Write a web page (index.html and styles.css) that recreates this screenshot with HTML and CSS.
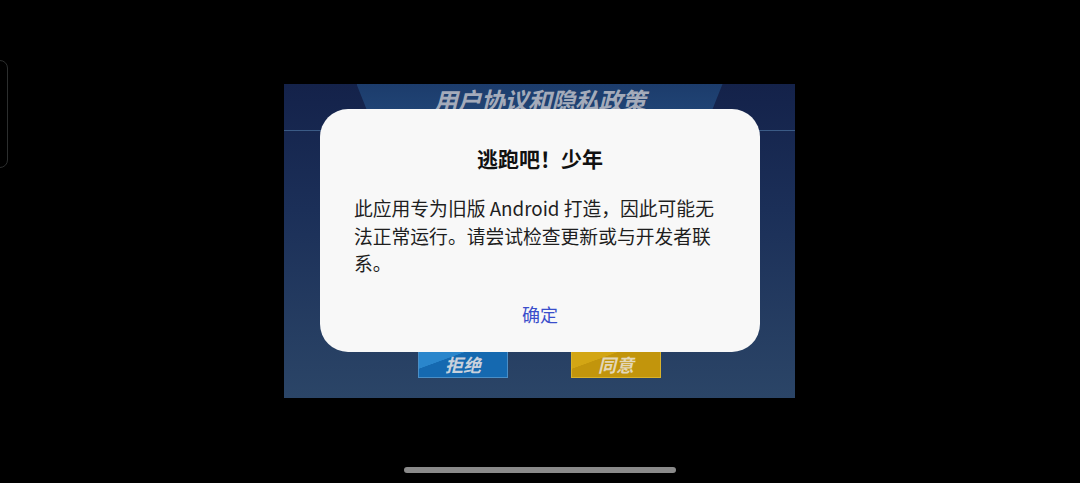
FILE: index.html
```html
<!doctype html>
<html lang="zh">
<head>
    <meta charset="utf-8">
    <title>逃跑吧！少年</title>
    <link rel="stylesheet" href="styles.css">
</head>
<body>

<div class="screen">
    <div class="side-handle"></div>

    <div class="game-panel">
        <div class="panel-header">
            <div class="header-band">
                <span class="panel-title">用户协议和隐私政策</span>
            </div>
        </div>
        <div class="panel-body">
            <div class="game-button refuse">拒绝</div>
            <div class="game-button agree">同意</div>
        </div>
    </div>

    <div class="dialog">
        <h2 class="dialog-title">逃跑吧！少年</h2>
        <p class="dialog-text">此应用专为旧版 Android 打造，因此可能无法正常运行。请尝试检查更新或与开发者联系。</p>
        <div class="dialog-actions">
            <button class="dialog-button">确定</button>
        </div>
    </div>

    <div class="home-bar"></div>
</div>

</body>
</html>
```

FILE: styles.css
```css
body {
    margin: 0;
    background-color: #000000;
    font-family: "Noto Sans CJK SC", "Noto Sans", sans-serif;
}

.screen {
    position: relative;
    width: 1080px;
    height: 483px;
    display: flex;
    align-items: center;
    justify-content: center;
    overflow: hidden;
}

.side-handle {
    position: absolute; /* system edge overlay */
    left: -10px;
    top: 60px;
    width: 16px;
    height: 106px;
    border: 1px solid #2c2e2e;
    border-radius: 8px;
}

.game-panel {
    width: 511px;
    height: 314px;
    margin: 0 1px 1px 0; /* nudges the panel onto whole pixels */
    display: flex;
    flex-direction: column;
    background: linear-gradient(180deg, #14224a 0%, #1b2f58 40%, #2b4567 100%);
}

.panel-header {
    height: 46px;
    display: flex;
    justify-content: center;
    border-bottom: 1px solid #3b5b86;
}

.header-band {
    width: 366px;
    display: flex;
    justify-content: center;
    background: linear-gradient(180deg, #1c3c6c 0%, #23497a 100%);
    clip-path: polygon(0 0, 100% 0, 95% 100%, 5% 100%);
}

.panel-title {
    margin-top: -1px;
    font-size: 24px;
    line-height: 34px;
    font-style: italic;
    font-weight: bold;
    color: #a4abba;
    letter-spacing: -0.5px;
}

.panel-body {
    flex: 1;
    display: flex;
    align-items: flex-end;
    justify-content: center;
    gap: 63px;
    padding-bottom: 20px;
}

.game-button {
    width: 88px;
    height: 26px;
    display: flex;
    align-items: center;
    justify-content: center;
    font-size: 18px;
    line-height: 24px;
    font-style: italic;
    font-weight: bold;
    color: #c9d1dc;
}

.refuse {
    border: 1px solid #4a8ec6;
    background: linear-gradient(160deg, #2a86cc 0%, #2a86cc 30%, #1569b0 31%, #1569b0 100%);
}

.agree {
    border: 1px solid #d9b22a;
    background: linear-gradient(160deg, #d3a614 0%, #d3a614 30%, #c2950c 31%, #c2950c 100%);
    color: #e3d7b8;
}

.dialog {
    position: absolute; /* modal over the game */
    left: 320px;
    top: 109px;
    width: 440px;
    height: 243px;
    box-sizing: border-box;
    padding: 34px 34px 0;
    background-color: #f8f8f8;
    border-radius: 28px;
}

.dialog-title {
    margin: 0;
    text-align: center;
    font-size: 21px;
    line-height: 30px;
    font-weight: bold;
    color: #111111;
}

.dialog-text {
    margin: 21px 0 0;
    font-size: 18.8px;
    line-height: 27.5px;
    color: #1e1e1e;
}

.dialog-actions {
    display: flex;
    justify-content: center;
    margin-top: 23px;
}

.dialog-button {
    padding: 0;
    border: none;
    background: none;
    font-family: inherit;
    font-size: 18px;
    line-height: 28px;
    color: #3a4ecb;
}

.home-bar {
    position: absolute; /* system gesture bar */
    left: 404px;
    bottom: 10px;
    width: 272px;
    height: 6px;
    border-radius: 3px;
    background-color: #8a8a8a;
}
```
